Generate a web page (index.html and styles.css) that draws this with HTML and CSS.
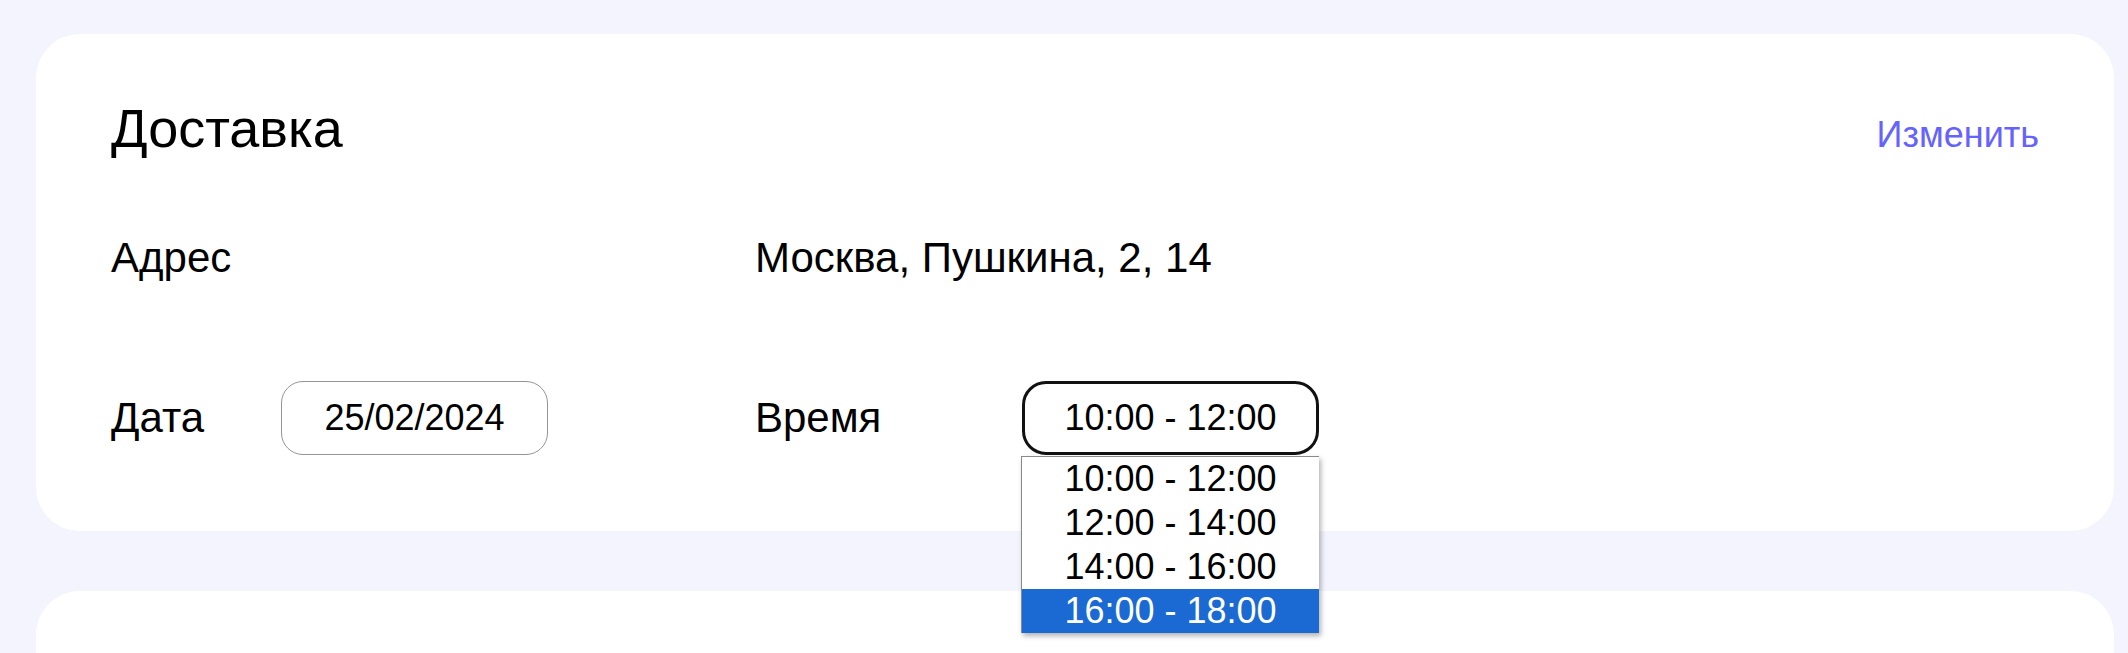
FILE: index.html
```html
<!DOCTYPE html>
<html lang="ru">
<head>
<meta charset="utf-8">
<title>Доставка</title>
<link rel="stylesheet" href="styles.css">
</head>
<body>
<main class="page">
  <section class="card">
    <header class="card-head">
      <h2 class="card-title">Доставка</h2>
      <a class="edit-link" href="#">Изменить</a>
    </header>
    <div class="info-grid">
      <div class="label label-wide">Адрес</div>
      <div class="value value-wide">Москва, Пушкина, 2, 14</div>

      <div class="label">Дата</div>
      <div class="cell"><div class="field field-date">25/02/2024</div></div>
      <div class="label">Время</div>
      <div class="cell select-wrap">
        <div class="field field-time">10:00 - 12:00</div>
        <ul class="dropdown">
          <li class="option">10:00 - 12:00</li>
          <li class="option">12:00 - 14:00</li>
          <li class="option">14:00 - 16:00</li>
          <li class="option option-active">16:00 - 18:00</li>
        </ul>
      </div>
    </div>
  </section>
  <section class="card card-next"></section>
</main>
</body>
</html>
```

FILE: styles.css
```css
html, body {
  margin: 0;
  padding: 0;
  background: #f4f4ff;
  font-family: "Liberation Sans", Arial, sans-serif;
  color: #000;
  overflow: hidden;
}

.page {
  padding: 34px 14px 0 36px;
  display: flex;
  flex-direction: column;
  gap: 60px;
}

.card {
  background: #fff;
  border-radius: 44px;
  padding: 63px 75px 76px 75px;
}

.card-next {
  height: 300px;
  padding: 0;
}

.card-head {
  display: flex;
  justify-content: space-between;
  align-items: baseline;
}

.card-title {
  margin: 0;
  font-size: 54px;
  line-height: 62px;
  font-weight: 400;
}

.edit-link {
  font-size: 36px;
  line-height: 44px;
  color: #6562ff;
  text-decoration: none;
}

.info-grid {
  margin-top: 75px;
  display: grid;
  grid-template-columns: 170px 474px 267px auto;
  row-gap: 99px;
  align-items: center;
}

.label, .value {
  font-size: 42px;
  line-height: 48px;
}

.label-wide {
  grid-column: 1 / 3;
}

.value-wide {
  grid-column: 3 / 5;
}

.cell {
  display: flex;
}

.field {
  box-sizing: border-box;
  height: 74px;
  display: flex;
  align-items: center;
  justify-content: center;
  font-size: 36px;
  background: #fff;
}

.field-date {
  width: 267px;
  border: 1.5px solid #959595;
  border-radius: 22px;
}

.field-time {
  width: 297px;
  border: 3.5px solid #111;
  border-radius: 24px;
}

.select-wrap {
  position: relative;
}

.dropdown {
  position: absolute;
  left: -1px;
  top: 75px;
  width: 298px;
  box-sizing: border-box;
  margin: 0;
  padding: 0;
  list-style: none;
  background: #fff;
  border-top: 1px solid #8a8a8a;
  border-left: 1px solid #8a8a8a;
  box-shadow: 2px 3px 5px rgba(0, 0, 0, 0.3);
  z-index: 2;
}

.option {
  height: 44px;
  display: flex;
  align-items: center;
  justify-content: center;
  font-size: 36px;
}

.option-active {
  background: #1b69d3;
  color: #fff;
}
```
